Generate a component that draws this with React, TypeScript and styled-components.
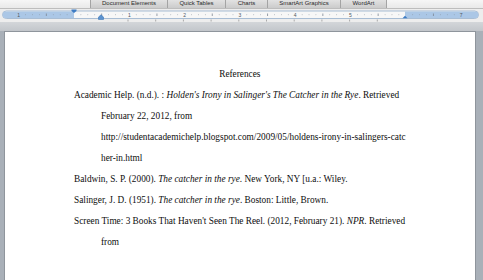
import React from "react";
import styled, { createGlobalStyle } from "styled-components";

const GlobalStyle = createGlobalStyle`
	html, body {
		margin: 0;
		padding: 0;
		background: #aab1b9;
		overflow: hidden;
	}
`;

const Frame = styled.div`
	width: 483px;
	height: 280px;
	display: flex;
	flex-direction: column;
	overflow: hidden;
	font-family: "Liberation Serif", "Times New Roman", serif;
`;

const TabBar = styled.div`
	flex: 0 0 9px;
	display: flex;
	padding-left: 90px;
	background: linear-gradient(#f6f6f6, #e9e9e9);
	border-bottom: 1px solid #bdbdbd;
	box-sizing: border-box;
`;

const Tab = styled.div<{ $w: number }>`
	width: ${(p) => p.$w}px;
	border-right: 1px solid #a4a4a4;
	background: linear-gradient(#e2e2e2, #cbcbcb);
	font-family: "Liberation Sans", Arial, sans-serif;
	font-size: 6px;
	color: #2a2a2a;
	text-align: center;
	line-height: 7px;
	white-space: nowrap;
	box-sizing: border-box;
	&:first-child {
		border-left: 1px solid #a4a4a4;
	}
`;

const RulerBar = styled.div`
	flex: 0 0 13px;
	background: #ededed;
	display: flex;
`;

const Gap = styled.div`
	flex: 0 0 9px;
	background: linear-gradient(#d3d6d9, #c2c6cb);
`;

const Workspace = styled.div`
	flex: 1;
	display: flex;
	padding: 0 8px 0 4px;
	background: #a9b0b8;
`;

const Page = styled.div`
	flex: 1;
	background: #ffffff;
	border: 1px solid #8f959c;
	border-bottom: none;
	padding: 32px 69px 0 69px;
	color: #0e0e0e;
	font-size: 9.3px;
	line-height: 21px;
`;

const Heading = styled.div`
	text-align: center;
`;

const Line = styled.div<{ $indent?: boolean }>`
	white-space: nowrap;
	padding-left: ${(p) => (p.$indent ? "27px" : "0")};
`;

const inch = 55.3;
const left = 74;

function Ruler() {
	const dots: React.ReactNode[] = [];
	for (let i = -8; i <= 56; i++) {
		const x = left + (i * inch) / 8;
		if (x < 6 || x > 474) continue;
		if (i % 8 === 0) continue;
		if (i % 4 === 0) {
			dots.push(<line key={i} x1={x} x2={x} y1={4.5} y2={7} stroke="#7d8894" strokeWidth={0.8} />);
		} else {
			dots.push(<circle key={i} cx={x} cy={5.8} r={0.45} fill="#8a949f" />);
		}
	}
	const labels: [number, string][] = [
		[-1, "1"],
		[1, "1"],
		[2, "2"],
		[3, "3"],
		[4, "4"],
		[5, "5"],
		[7, "7"],
	];
	const nums = labels.map(([n, t]) => (
		<text key={n} x={left + n * inch} y={7.8} fontSize={5} textAnchor="middle" fill="#4d5660" fontFamily="Liberation Sans, sans-serif">
			{t}
		</text>
	));
	const stops: React.ReactNode[] = [];
	for (let k = 0; k < 10; k++) {
		const x = 128 + k * 27.7;
		stops.push(<line key={k} x1={x} x2={x} y1={10.5} y2={12.5} stroke="#8d8d8d" strokeWidth={0.7} />);
	}
	return (
		<svg width={483} height={13} viewBox="0 0 483 13">
			<rect x={2.5} y={2} width={476} height={7.5} rx={3.75} fill="#f7f7f7" stroke="#94aecb" strokeWidth={0.8} />
			<path d="M6 2.4 H74 V9.1 H6 A3.35 3.35 0 0 1 6 2.4 Z" fill="#abc7e6" />
			<path d="M405 2.4 H475 A3.35 3.35 0 0 1 475 9.1 H405 Z" fill="#abc7e6" />
			{dots}
			{nums}
			{stops}
			<path d="M71.5 0.5 H76.5 V2 L74 4 L71.5 2 Z" fill="#3d7cc4" />
			<path d="M98.5 8 L101 5.8 L103.5 8 V10.5 H98.5 Z" fill="#5b92cf" stroke="#2f6cb2" strokeWidth={0.5} />
			<path d="M402.5 9.3 L405 6.8 L407.5 9.3 Z" fill="#3d7cc4" />
		</svg>
	);
}

export default function App() {
	return (
		<Frame>
			<GlobalStyle />
			<TabBar>
				<Tab $w={78}>Document Elements</Tab>
				<Tab $w={58}>Quick Tables</Tab>
				<Tab $w={42}>Charts</Tab>
				<Tab $w={73}>SmartArt Graphics</Tab>
				<Tab $w={46}>WordArt</Tab>
			</TabBar>
			<RulerBar>
				<Ruler />
			</RulerBar>
			<Gap />
			<Workspace>
				<Page>
					<Heading>References</Heading>
					<Line>
						Academic Help. (n.d.). : <i>Holden's Irony in Salinger's The Catcher in the Rye</i>. Retrieved
					</Line>
					<Line $indent>February 22, 2012, from</Line>
					<Line $indent>http://studentacademichelp.blogspot.com/2009/05/holdens-irony-in-salingers-catc</Line>
					<Line $indent>her-in.html</Line>
					<Line>
						Baldwin, S. P. (2000). <i>The catcher in the rye</i>. New York, NY [u.a.: Wiley.
					</Line>
					<Line>
						Salinger, J. D. (1951). <i>The catcher in the rye</i>. Boston: Little, Brown.
					</Line>
					<Line>
						Screen Time: 3 Books That Haven't Seen The Reel. (2012, February 21). <i>NPR</i>. Retrieved
					</Line>
					<Line $indent>from</Line>
				</Page>
			</Workspace>
		</Frame>
	);
}
